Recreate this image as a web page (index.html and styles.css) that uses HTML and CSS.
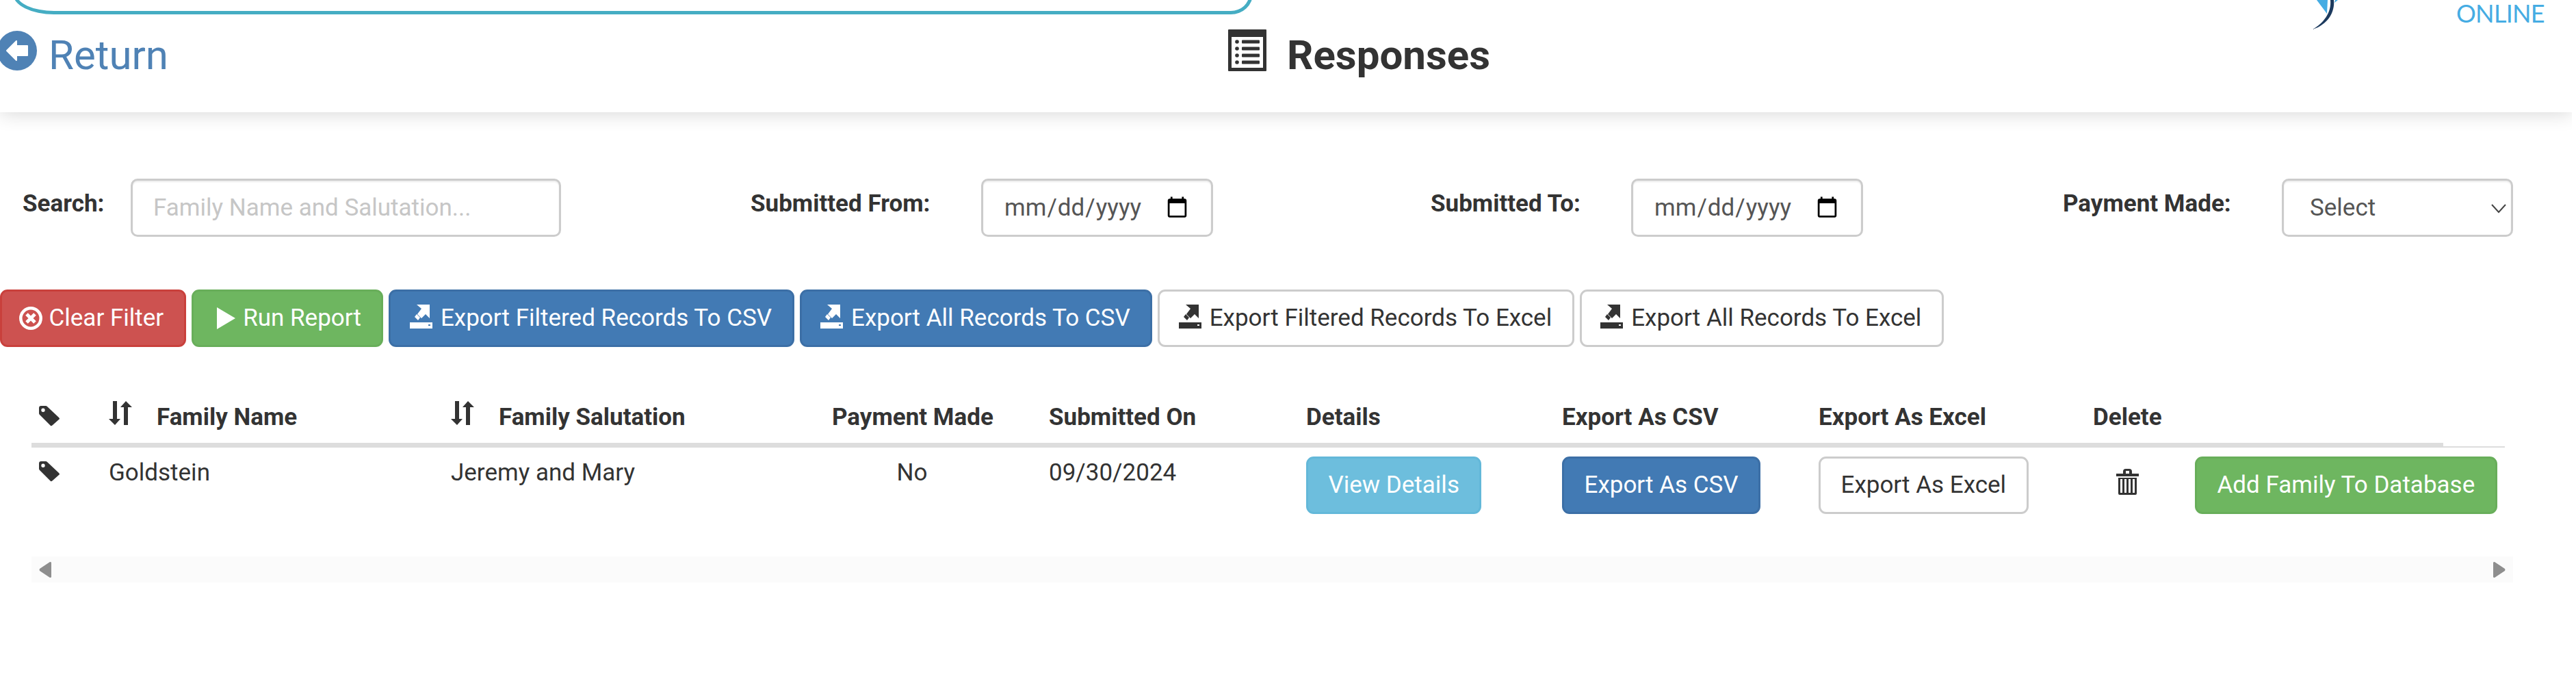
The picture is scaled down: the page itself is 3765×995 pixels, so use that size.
FILE: index.html
```html
<!DOCTYPE html>
<html lang="en">
<head>
<meta charset="utf-8">
<title>Responses</title>
<link rel="stylesheet" href="styles.css">
</head>
<body>
<svg class="sprite" xmlns="http://www.w3.org/2000/svg">
  <symbol id="i-export" viewBox="0 0 33 35">
    <path fill-rule="evenodd" d="M0 26H33V35H0ZM27 29V31H30V29Z"/>
    <path d="M10 0H29V20L23 14 17 20 11 14 17 6Z"/>
    <path d="M7 18 10 14 15 19 12 23Z"/>
  </symbol>
  <symbol id="i-tag" viewBox="0 0 30 30">
    <path fill-rule="evenodd" d="M3 0H10Q11 0 12 1L29 17Q31 19 29 20L20 28Q18 30 17 29L1 13Q0 12 0 11V3Q0 0 3 0ZM6 3.5A2.7 2.7 0 1 0 6 8.9 2.7 2.7 0 1 0 6 3.5Z"/>
  </symbol>
  <symbol id="i-sort" viewBox="0 0 34 35">
    <path d="M6 0H12V26H17L9 35 0 26H6Z"/>
    <path d="M25 0 34 9H28V35H22V9H17Z"/>
  </symbol>
</svg>
<div class="page">
  <header class="topbar">
    <div class="toprow">
      <div class="searchbox"></div>
      <svg class="logo" viewBox="0 0 40 44" xmlns="http://www.w3.org/2000/svg">
        <path fill="#45ace3" d="M6 0H22L21 20Z"/>
        <path fill="#45ace3" d="M33 0H37L32 4Z"/>
        <path fill="#1c3a5e" d="M26 0H31C33 18 22 36 0 43 16 34 28 18 26 0Z"/>
      </svg>
      <span class="online">ONLINE</span>
    </div>
    <div class="titlerow">
      <a class="return">
        <svg class="return-icon" viewBox="0 0 58 58" xmlns="http://www.w3.org/2000/svg">
          <circle cx="29" cy="29" r="29" fill="#4f82b5"/>
          <path fill="#fff" d="M14 29 28 15V22H44V36H28V43Z" stroke="#fff" stroke-width="2" stroke-linejoin="round"/>
        </svg>
        <span>Return</span>
      </a>
      <h1 class="title">
        <svg class="list-icon" viewBox="0 0 56 61" xmlns="http://www.w3.org/2000/svg">
          <path fill="#333" fill-rule="evenodd" d="M1 0H55Q56 0 56 1V60Q56 61 55 61H1Q0 61 0 60V1Q0 0 1 0ZM5 11V56H51V11Z"/>
          <g fill="#333">
            <circle cx="13" cy="18" r="2.8"/><circle cx="13" cy="28" r="2.8"/><circle cx="13" cy="38" r="2.8"/><circle cx="13" cy="48" r="2.8"/>
            <rect x="20" y="15.5" width="26" height="5" rx="1"/><rect x="20" y="25.5" width="26" height="5" rx="1"/><rect x="20" y="35.5" width="26" height="5" rx="1"/><rect x="20" y="45.5" width="26" height="5" rx="1"/>
          </g>
        </svg>
        <span>Responses</span>
      </h1>
    </div>
  </header>

  <section class="filters">
    <div class="filter f-search">
      <label class="filter-label">Search:</label>
      <input class="field field-search" type="text" placeholder="Family Name and Salutation...">
    </div>
    <div class="filter f-from">
      <label class="filter-label">Submitted From:</label>
      <input class="field field-date" type="date">
    </div>
    <div class="filter f-to">
      <label class="filter-label">Submitted To:</label>
      <input class="field field-date" type="date">
    </div>
    <div class="filter f-pay">
      <label class="filter-label">Payment Made:</label>
      <div class="select-wrap">
        <select class="field field-select"><option>Select</option></select>
        <svg class="chevron" viewBox="0 0 22 14" xmlns="http://www.w3.org/2000/svg"><path d="M1 1 11 12 21 1" fill="none" stroke="#444" stroke-width="2"/></svg>
      </div>
    </div>
  </section>

  <section class="actions">
    <button class="btn danger">
      <svg class="ico ico-clear" viewBox="0 0 34 34" xmlns="http://www.w3.org/2000/svg"><circle cx="17" cy="17" r="14.7" fill="none" stroke="#fff" stroke-width="4.5"/><path d="M11 11 23 23M23 11 11 23" stroke="#fff" stroke-width="5"/></svg>
      Clear Filter
    </button>
    <button class="btn success">
      <svg class="ico ico-play" viewBox="0 0 27 32" xmlns="http://www.w3.org/2000/svg"><path fill="#fff" d="M0 0 27 16 0 32Z"/></svg>
      Run Report
    </button>
    <button class="btn primary"><svg class="ico ico-export"><use href="#i-export"/></svg>Export Filtered Records To CSV</button>
    <button class="btn primary"><svg class="ico ico-export"><use href="#i-export"/></svg>Export All Records To CSV</button>
    <button class="btn plain"><svg class="ico ico-export"><use href="#i-export"/></svg>Export Filtered Records To Excel</button>
    <button class="btn plain"><svg class="ico ico-export"><use href="#i-export"/></svg>Export All Records To Excel</button>
  </section>

  <section class="results">
    <table class="grid">
      <colgroup>
        <col class="c1"><col class="c2"><col class="c3"><col class="c4"><col class="c5"><col class="c6"><col class="c7"><col class="c8"><col class="c9"><col class="c10"><col class="c11">
      </colgroup>
      <thead>
        <tr>
          <th><svg class="tag"><use href="#i-tag"/></svg></th>
          <th><svg class="sort"><use href="#i-sort"/></svg>Family Name</th>
          <th><svg class="sort"><use href="#i-sort"/></svg>Family Salutation</th>
          <th class="center">Payment Made</th>
          <th>Submitted On</th>
          <th>Details</th>
          <th>Export As CSV</th>
          <th>Export As Excel</th>
          <th>Delete</th>
          <th></th>
          <th class="noline"></th>
        </tr>
      </thead>
      <tbody>
        <tr>
          <td><svg class="tag"><use href="#i-tag"/></svg></td>
          <td>Goldstein</td>
          <td>Jeremy and Mary</td>
          <td class="center">No</td>
          <td>09/30/2024</td>
          <td class="has-btn"><button class="btn info">View Details</button></td>
          <td class="has-btn"><button class="btn primary">Export As CSV</button></td>
          <td class="has-btn"><button class="btn plain">Export As Excel</button></td>
          <td class="has-icon">
            <svg class="trash" viewBox="0 0 33 38" xmlns="http://www.w3.org/2000/svg">
              <g fill="#333">
                <path fill-rule="evenodd" d="M10 4Q10 0 14 0H19Q23 0 23 4V7H33V11H0V7H10ZM14 3V7H19V3Z"/>
                <path fill-rule="evenodd" d="M3 13H30V36Q30 38 28 38H5Q3 38 3 36ZM6 15V35H9V15ZM12 15V35H15V15ZM18 15V35H21V15ZM24 15V35H27V15Z"/>
              </g>
            </svg>
          </td>
          <td class="has-btn" colspan="2"><button class="btn success">Add Family To Database</button></td>
        </tr>
      </tbody>
    </table>
    <div class="hscroll">
      <svg class="arrow" viewBox="0 0 18 23" xmlns="http://www.w3.org/2000/svg"><path fill="#8e8e8e" d="M18 1V22Q18 23 16 23L1 13Q0 11.500 1 10L16 0Q18 0 18 1Z"/></svg>
      <svg class="arrow" viewBox="0 0 18 23" xmlns="http://www.w3.org/2000/svg"><path fill="#8e8e8e" d="M0 1V22Q0 23 2 23L17 13Q18 11.500 17 10L2 0Q0 0 0 1Z"/></svg>
    </div>
  </section>
</div>
</body>
</html>
```

FILE: styles.css
```css
* { box-sizing: border-box; }
html, body { margin: 0; padding: 0; background: #fff; }
body {
  width: 3765px;
  height: 995px;
  overflow: hidden;
  font-family: Roboto, "Liberation Sans", sans-serif;
  font-size: 35px;
  line-height: 50px;
  color: #333;
}
.sprite { display: none; }
.page { width: 3759px; }

/* header */
.topbar {
  height: 164px;
  background: #fff;
  box-shadow: 0 2px 26px rgba(0, 0, 0, .16);
  position: relative;
  clip-path: inset(0 0 -60px 0);
}
.toprow { display: flex; align-items: flex-start; height: 45px; }
.searchbox {
  width: 1812px;
  height: 61px;
  margin: -40px 0 0 19px;
  border: 5px solid #45adc3;
  border-radius: 0 0 32px 60px / 0 0 30px 30px;
}
.logo { width: 40px; height: 44px; margin-left: 1549px; flex: none; }
.online {
  margin: 1px 0 0 170px;
  font-family: Lato, "Open Sans", sans-serif;
  font-weight: 400;
  font-size: 36px;
  letter-spacing: -.7px;
  line-height: 36px;
  color: #45ace3;
  white-space: nowrap;
}
.titlerow { display: flex; align-items: flex-start; }
.return {
  display: flex;
  align-items: flex-start;
  width: 1795px;
  font-size: 60px;
  line-height: 70px;
  color: #4f82b5;
}
.return-icon { width: 58px; height: 58px; margin-left: -4px; margin-right: 17px; flex: none; }
.return span { margin-top: 1px; }
.title {
  display: flex;
  align-items: flex-start;
  margin: 0;
  font-size: 60px;
  line-height: 70px;
  font-weight: 700;
  color: #333;
}
.list-icon { width: 56px; height: 61px; margin-top: -2px; margin-right: 30px; flex: none; }
.title span { margin-top: 1px; }

/* filters */
.filters { display: flex; align-items: flex-start; margin-top: 97px; padding-left: 33px; }
.filter { display: flex; align-items: flex-start; }
.filter-label { font-weight: 700; padding-top: 12px; white-space: nowrap; }
.f-search { width: 1064px; }
.f-search .filter-label { width: 158px; }
.f-from { width: 994px; }
.f-from .filter-label { width: 337px; }
.f-to { width: 924px; }
.f-to .filter-label { width: 293px; }
.f-pay .filter-label { width: 320px; }
.field {
  height: 85px;
  border: 3px solid #ccc;
  border-radius: 10px;
  background: #fff;
  font: 35px/50px Roboto, "Liberation Sans", sans-serif;
  color: #555;
  box-shadow: inset 0 2px 2px rgba(0, 0, 0, .075);
  outline: none;
}
.field-search { width: 629px; padding: 0 30px; }
.field-search::placeholder { color: #c6c6c6; opacity: 1; }
.field-date { width: 339px; padding: 0 30px; }
.select-wrap { position: relative; width: 338px; height: 85px; }
.field-select { width: 338px; padding: 0 38px; appearance: none; -webkit-appearance: none; }
.chevron { position: absolute; left: 306px; top: 37px; width: 22px; height: 14px; }

/* buttons */
.actions { display: flex; gap: 8px; margin-top: 77px; }
.btn {
  display: inline-flex;
  align-items: center;
  justify-content: center;
  height: 84px;
  padding: 0 29.5px;
  border: 3px solid #ccc;
  border-radius: 11px;
  background: #fff;
  color: #333;
  font: 35px/50px Roboto, "Liberation Sans", sans-serif;
  white-space: nowrap;
  vertical-align: top;
}
.danger { background: #cd5250; border-color: #c9403c; color: #fff; }
.success { background: #6eb660; border-color: #68ae5a; color: #fff; }
.primary { background: #427ab4; border-color: #3c6fa6; color: #fff; }
.info { background: #6dbedd; border-color: #63b8d9; color: #fff; }
.plain { background: #fff; border-color: #ccc; color: #333; }
.ico { flex: none; fill: currentColor; }
.ico-clear { width: 34px; height: 34px; margin: 0 10px 0 -5px; }
.ico-play { width: 27px; height: 32px; margin: 0 11px 0 5px; }
.ico-export { width: 33px; height: 35px; margin: -5px 12px 0 -2px; }

/* table */
.results { padding-left: 46px; margin-top: 73px; }
.grid { table-layout: fixed; width: 3615px; border-collapse: separate; border-spacing: 0; }
.c1 { width: 102px; } .c2 { width: 500px; } .c3 { width: 557px; } .c4 { width: 317px; }
.c5 { width: 376px; } .c6 { width: 374px; } .c7 { width: 375px; } .c8 { width: 401px; }
.c9 { width: 149px; } .c10 { width: 374px; } .c11 { width: 90px; }
.grid th {
  height: 72px;
  padding: 0 11px 12px;
  border-bottom: 5px solid #ddd;
  font-weight: 700;
  text-align: left;
  vertical-align: bottom;
  white-space: nowrap;
}
.grid th.noline { border-bottom-color: transparent; }
.grid td {
  padding: 12px 11px 29px;
  border-top: 2px solid #ddd;
  vertical-align: top;
  white-space: nowrap;
}
.grid .center { text-align: center; padding-right: 72px; }
.grid td.has-btn { padding-top: 13px; }
.grid td.has-icon { padding-top: 31px; padding-left: 45px; }
.tag { display: inline-block; width: 30px; height: 30px; fill: #333; vertical-align: -2px; }
.sort { display: inline-block; width: 34px; height: 35px; margin-right: 36px; fill: #333; vertical-align: baseline; }
.trash { display: block; width: 33px; height: 38px; }

/* scrollbar strip */
.hscroll {
  display: flex;
  align-items: center;
  justify-content: space-between;
  width: 3627px;
  height: 38px;
  margin-top: 33px;
  padding: 0 11px;
  background: #fbfbfb;
}
.arrow { width: 18px; height: 23px; }
```
